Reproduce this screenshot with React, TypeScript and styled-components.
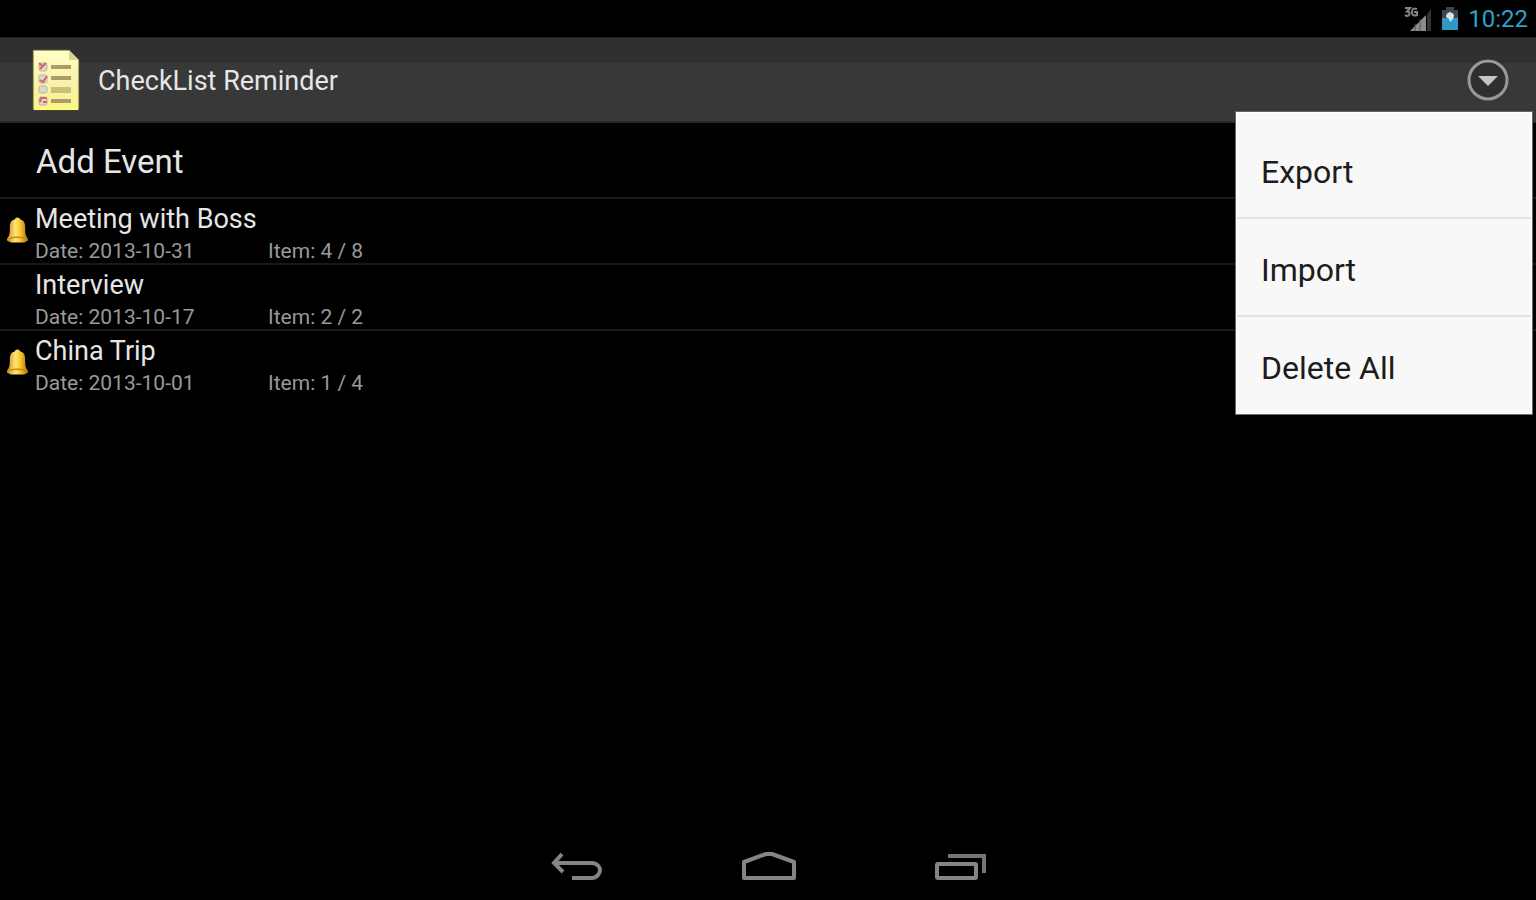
import React, { useState } from "react";
import styled, { createGlobalStyle } from "styled-components";

const GlobalStyle = createGlobalStyle`
  * { box-sizing: border-box; }
  body { margin: 0; background: #000; font-family: Roboto, "Liberation Sans", sans-serif; color: #e6e6e6; }
  button { font: inherit; color: inherit; background: none; border: 0; padding: 0; text-align: left; cursor: pointer; }
  h1, h2, p, ul { margin: 0; padding: 0; }
  ul { list-style: none; }
  svg { display: block; flex: none; }
`;

const Screen = styled.div`
  min-height: 100vh;
  display: flex;
  flex-direction: column;
`;

const StatusBar = styled.div`
  height: 37px;
  padding-right: 8px;
  display: flex;
  align-items: center;
  justify-content: flex-end;
  gap: 9px;
`;

const Clock = styled.time`
  font-size: 24px;
  line-height: 36px;
  color: #2fa0cc;
`;

const ActionBar = styled.header`
  position: relative;
  height: 86px;
  padding: 0 26px 0 32px;
  display: flex;
  align-items: center;
  background: linear-gradient(#303030 0 25px, #383838 25px 100%);
  border-top: 1px solid #232323;
  border-bottom: 2px solid #2a2a2a;
`;

const Title = styled.h1`
  flex: 1;
  margin-left: 18px;
  padding-top: 2px;
  font-size: 27px;
  line-height: 36px;
  font-weight: 400;
`;

const Menu = styled.ul`
  position: absolute;
  top: 74px;
  right: 4px;
  width: 296px;
  padding-top: 8px;
  background: #f8f8f8;
  border: 1px solid #fff;
  outline: 1px solid #666;
`;

const MenuItem = styled.li`
  & + & { border-top: 2px solid #e2e2e2; }
`;

const MenuButton = styled.button`
  display: block;
  width: 100%;
  height: 96px;
  padding: 6px 24px 0;
  font-size: 32px;
  line-height: 36px;
  color: #1c1c1c;
`;

const AddEvent = styled.button`
  height: 74px;
  padding: 4px 36px 0;
  font-size: 33px;
  line-height: 40px;
`;

const EventRow = styled.li`
  height: 66px;
  padding: 4px 0 0 6px;
  display: flex;
  align-items: center;
  border-top: 2px solid #181818;
`;

const Marker = styled.div`
  width: 29px;
  padding-bottom: 6px;
`;

const EventName = styled.h2`
  font-size: 27px;
  line-height: 36px;
  font-weight: 400;
`;

const Details = styled.div`
  display: grid;
  grid-template-columns: 233px auto;
  font-size: 21px;
  line-height: 28px;
  color: #999;
`;

const NavBar = styled.nav`
  margin-top: auto;
  height: 66px;
  padding-left: 2px;
  display: flex;
  justify-content: center;
`;

const NavButton = styled.button`
  width: 192px;
  display: flex;
  align-items: center;
  justify-content: center;
`;

const Signal = () => (
  <svg width="28" height="26" viewBox="0 0 28 26" aria-hidden="true">
    <path d="M6 25 22 9v16z" fill="#8c8c8c" />
    <path d="M11 25V18M16 25V13" stroke="#555" strokeWidth="1" />
    <path d="M23 8l4-5v22h-4z" fill="#333" />
    <path d="M1 2h5L3 5.500q4 0 2 3.500-2 2-4 0M13 3q-5-2-5 3t5 3V6h-3" fill="none" stroke="#858585" strokeWidth="2" />
  </svg>
);

const Battery = () => (
  <svg width="18" height="25" viewBox="0 0 18 25" aria-hidden="true">
    <path d="M5 1h8v3h4v20H1V4h4z" fill="#3e4448" />
    <path d="M1 12h16v12H1z" fill="#3098c4" />
    <path d="M9 6q4 1 4 4l-1 3-3 3-1-3-3-2q0-4 4-5z" fill="#d5e2e8" />
  </svg>
);

const AppLogo = () => (
  <svg width="48" height="64" viewBox="0 0 48 64" aria-hidden="true">
    <defs>
      <linearGradient id="paper" x1="0" y1="0" x2="0" y2="1">
        <stop offset="0" stopColor="#ffffc8" />
        <stop offset=".6" stopColor="#f8f0a8" />
        <stop offset="1" stopColor="#fbf589" />
      </linearGradient>
    </defs>
    <path d="M1 2h36l10 10v50H1z" fill="url(#paper)" stroke="#55522f" />
    <path d="M37 2v10h10z" fill="#ddd58c" />
    <path d="M2 61h44" stroke="#fffb78" strokeWidth="2" />
    <g fill="#dcd9c8" stroke="#b9b3a4" strokeWidth="1">
      <rect x="7" y="15" width="8" height="8" rx="2" />
      <rect x="7" y="27" width="8" height="8" rx="2" />
      <rect x="7" y="38" width="8" height="7" rx="2" />
      <rect x="7" y="49" width="8" height="8" rx="2" />
    </g>
    <g fill="none" stroke="#d5626a" strokeWidth="2">
      <path d="M8 21l6-6M7 15l3 3M8 32l3 2 4-6M8 54l1-4h6M11 54h4" />
    </g>
    <path d="M19 19h20M19 30h20M19 53h20" stroke="#a99c68" strokeWidth="4" />
    <path d="M19 42h20" stroke="#cbbf7c" strokeWidth="6" />
  </svg>
);

const Bell = () => (
  <svg width="23" height="28" viewBox="0 0 24 28" aria-hidden="true">
    <defs>
      <linearGradient id="brass" x1="0" y1="0" x2="1" y2="0">
        <stop offset="0" stopColor="#c98a10" />
        <stop offset=".4" stopColor="#ffe476" />
        <stop offset=".65" stopColor="#f6c52c" />
        <stop offset="1" stopColor="#a86a06" />
      </linearGradient>
    </defs>
    <path d="M12 1c-2 0-2 1-3 2-4 1-5 4-5 8 0 6 0 8-3 12v2l4 2h14l4-2v-2c-3-4-3-6-3-12 0-4-1-7-5-8-1-1-1-2-3-2z" fill="url(#brass)" />
    <path d="M3 23q9-3 18 0" stroke="#c68b14" strokeWidth="1.500" fill="none" />
  </svg>
);

const Overflow = () => (
  <svg width="44" height="44" viewBox="0 0 44 44" aria-hidden="true">
    <circle cx="22" cy="22" r="19" fill="#2f2f2f" stroke="#999" strokeWidth="3" />
    <path d="M12 18h20l-10 10z" fill="#c4c4c0" />
  </svg>
);

const BackIcon = () => (
  <svg width="54" height="32" viewBox="0 0 54 32" fill="none" stroke="#858585" strokeWidth="4" aria-hidden="true">
    <path d="M4 12h38c5 0 8 4 8 7s-3 8-8 8H22" />
    <path d="M12 3L4 12l9 9" />
  </svg>
);

const HomeIcon = () => (
  <svg width="56" height="32" viewBox="0 0 56 32" fill="none" stroke="#858585" strokeWidth="4" aria-hidden="true">
    <path d="M3 27V11L25 3h6l22 8v16z" strokeLinejoin="round" />
  </svg>
);

const RecentIcon = () => (
  <svg width="54" height="32" viewBox="0 0 54 32" fill="none" stroke="#858585" aria-hidden="true">
    <rect x="3" y="13" width="39" height="14" rx="1" strokeWidth="4" />
    <path d="M14 5h36v17" stroke="#757575" strokeWidth="4" />
  </svg>
);

const events = [
  { name: "Meeting with Boss", date: "2013-10-31", items: "4 / 8", alarm: true },
  { name: "Interview", date: "2013-10-17", items: "2 / 2", alarm: false },
  { name: "China Trip", date: "2013-10-01", items: "1 / 4", alarm: true },
];

const actions = ["Export", "Import", "Delete All"];

export default function App() {
  const [open, setOpen] = useState(true);
  return (
    <Screen>
      <GlobalStyle />
      <StatusBar>
        <Signal />
        <Battery />
        <Clock>10:22</Clock>
      </StatusBar>
      <ActionBar>
        <AppLogo />
        <Title>CheckList Reminder</Title>
        <button type="button" aria-label="More options" aria-expanded={open} onClick={() => setOpen(!open)}>
          <Overflow />
        </button>
        {open && (
          <Menu>
            {actions.map((label) => (
              <MenuItem key={label}>
                <MenuButton type="button">{label}</MenuButton>
              </MenuItem>
            ))}
          </Menu>
        )}
      </ActionBar>
      <AddEvent type="button">Add Event</AddEvent>
      <ul>
        {events.map((event) => (
          <EventRow key={event.name}>
            <Marker>{event.alarm && <Bell />}</Marker>
            <div>
              <EventName>{event.name}</EventName>
              <Details>
                <span>Date: {event.date}</span>
                <span>Item: {event.items}</span>
              </Details>
            </div>
          </EventRow>
        ))}
      </ul>
      <NavBar>
        <NavButton type="button" aria-label="Back"><BackIcon /></NavButton>
        <NavButton type="button" aria-label="Home"><HomeIcon /></NavButton>
        <NavButton type="button" aria-label="Recent apps"><RecentIcon /></NavButton>
      </NavBar>
    </Screen>
  );
}
